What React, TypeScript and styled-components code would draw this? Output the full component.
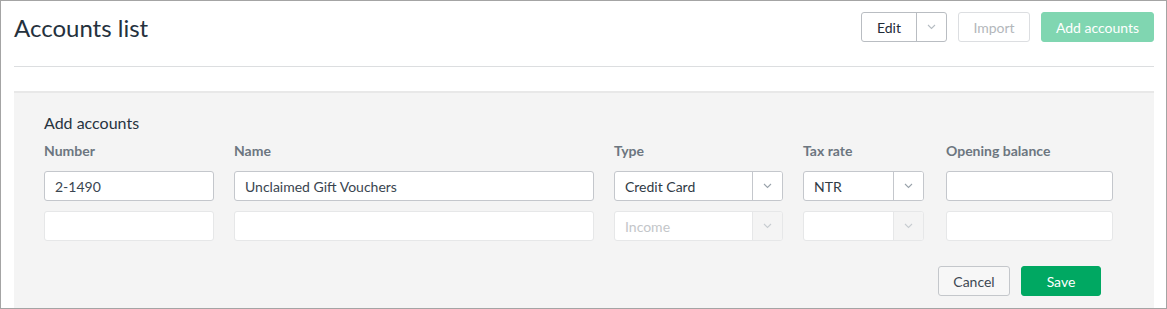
import React from 'react';
import styled, { createGlobalStyle } from 'styled-components';

const GlobalStyle = createGlobalStyle`
	html, body {
		margin: 0;
		padding: 0;
		background: #ffffff;
	}
	body {
		font-family: Lato, "Noto Sans", "Liberation Sans", sans-serif;
		color: #2f3b47;
	}
	* {
		box-sizing: border-box;
	}
`;

const Frame = styled.div`
	width: 1167px;
	height: 309px;
	border: 1px solid #a4a4a4;
	background: #ffffff;
	padding: 0 12px 0 13px;
	overflow: hidden;
`;

const Header = styled.div`
	display: flex;
	align-items: flex-start;
	justify-content: space-between;
	height: 66px;
	padding-top: 11px;
	border-bottom: 1px solid #dcdee0;
`;

const Title = styled.h1`
	margin: 0;
	font-size: 24px;
	font-weight: 400;
	line-height: 32px;
	color: #25313d;
`;

const Actions = styled.div`
	display: flex;
	gap: 11px;
`;

const ButtonGroup = styled.div`
	display: flex;
	border: 1px solid #b9bdc2;
	border-radius: 3px;
	height: 30px;
	background: #ffffff;
`;

const GroupButton = styled.button<{ $narrow?: boolean }>`
	display: flex;
	align-items: center;
	justify-content: center;
	width: ${({ $narrow }) => ($narrow ? '30px' : '54px')};
	height: 100%;
	padding: 0;
	border: none;
	border-left: ${({ $narrow }) => ($narrow ? '1px solid #b9bdc2' : 'none')};
	background: transparent;
	font-family: inherit;
	font-size: 14px;
	color: #1f2b37;
`;

const Button = styled.button<{ $variant?: 'default' | 'disabled' | 'primary' | 'primaryMuted'; $width: number }>`
	width: ${({ $width }) => $width}px;
	height: 30px;
	border-radius: 3px;
	font-family: inherit;
	font-size: 14px;
	padding: 0;
	border: 1px solid
		${({ $variant }) =>
			$variant === 'disabled' ? '#dcdee1' : $variant === 'primary' ? '#00a862' : $variant === 'primaryMuted' ? '#80d6b1' : '#c4c7cb'};
	background: ${({ $variant }) =>
		$variant === 'primary' ? '#00a862' : $variant === 'primaryMuted' ? '#80d6b1' : $variant === 'disabled' ? '#ffffff' : '#f7f7f7'};
	color: ${({ $variant }) =>
		$variant === 'disabled' ? '#b3b7bb' : $variant === 'primary' || $variant === 'primaryMuted' ? '#ffffff' : '#3d4853'};
`;

const Panel = styled.section`
	margin-top: 24px;
	border-top: 2px solid #e8e8e8;
	background: #f4f4f4;
	padding: 19px 53px 20px 30px;
	height: 230px;
`;

const PanelTitle = styled.h2`
	margin: 0;
	font-size: 16px;
	font-weight: 400;
	line-height: 22px;
	color: #27333f;
`;

const Grid = styled.div`
	display: grid;
	grid-template-columns: 170px 360px 169px 123px 167px;
	column-gap: 20px;
	row-gap: 10px;
	margin-top: 7px;
`;

const Label = styled.div`
	font-size: 14px;
	font-weight: 700;
	line-height: 20px;
	color: #6c7680;
`;

const Input = styled.div<{ $muted?: boolean }>`
	height: 30px;
	border: 1px solid ${({ $muted }) => ($muted ? '#e6e7e8' : '#c4c7cc')};
	border-radius: 3px;
	background: #ffffff;
	padding: 0 10px;
	display: flex;
	align-items: center;
	font-size: 14px;
	color: #3a4550;
`;

const Select = styled.div<{ $muted?: boolean; $width?: number }>`
	display: flex;
	height: 30px;
	width: ${({ $width }) => ($width ? `${$width}px` : '100%')};
	border: 1px solid ${({ $muted }) => ($muted ? '#e6e7e8' : '#c4c7cc')};
	border-radius: 3px;
	background: #ffffff;
	overflow: hidden;
`;

const SelectValue = styled.div<{ $placeholder?: boolean }>`
	flex: 1;
	display: flex;
	align-items: center;
	padding: 0 10px;
	font-size: 14px;
	color: ${({ $placeholder }) => ($placeholder ? '#c3c6c9' : '#2f3a45')};
`;

const SelectArrow = styled.div<{ $muted?: boolean }>`
	width: 30px;
	display: flex;
	align-items: center;
	justify-content: center;
	border-left: 1px solid ${({ $muted }) => ($muted ? '#e6e7e8' : '#c4c7cc')};
	background: ${({ $muted }) => ($muted ? '#f4f4f4' : '#ffffff')};
`;

const Footer = styled.div`
	display: flex;
	justify-content: flex-end;
	gap: 11px;
	margin-top: 25px;
`;

const Chevron = ({ color = '#9aa3ab' }: { color?: string }) => (
	<svg width='9' height='6' viewBox='0 0 9 6'>
		<path d='M1 1l3.5 3.5L8 1' fill='none' stroke={color} strokeWidth='1.1' />
	</svg>
);

const rows = [
	{ number: '2-1490', name: 'Unclaimed Gift Vouchers', type: 'Credit Card', tax: 'NTR', filled: true },
	{ number: '', name: '', type: 'Income', tax: '', filled: false }
];

const App = () => (
	<>
		<GlobalStyle />
		<Frame>
			<Header>
				<Title>Accounts list</Title>
				<Actions>
					<ButtonGroup>
						<GroupButton>Edit</GroupButton>
						<GroupButton $narrow><Chevron color='#b5bcc2' /></GroupButton>
					</ButtonGroup>
					<Button $variant='disabled' $width={72}>Import</Button>
					<Button $variant='primaryMuted' $width={113}>Add accounts</Button>
				</Actions>
			</Header>
			<Panel>
				<PanelTitle>Add accounts</PanelTitle>
				<Grid>
					<Label>Number</Label>
					<Label>Name</Label>
					<Label>Type</Label>
					<Label>Tax rate</Label>
					<Label>Opening balance</Label>
					{rows.map((row, i) => (
						<React.Fragment key={i}>
							<Input $muted={!row.filled}>{row.number}</Input>
							<Input $muted={!row.filled}>{row.name}</Input>
							<Select $muted={!row.filled}>
								<SelectValue $placeholder={!row.filled}>{row.type}</SelectValue>
								<SelectArrow $muted={!row.filled}><Chevron color={row.filled ? '#9aa3ab' : '#c8cdd1'} /></SelectArrow>
							</Select>
							<Select $muted={!row.filled} $width={121}>
								<SelectValue>{row.tax}</SelectValue>
								<SelectArrow $muted={!row.filled}><Chevron color={row.filled ? '#9aa3ab' : '#c8cdd1'} /></SelectArrow>
							</Select>
							<Input $muted={!row.filled} />
						</React.Fragment>
					))}
				</Grid>
				<Footer>
					<Button $width={72}>Cancel</Button>
					<Button $variant='primary' $width={80}>Save</Button>
				</Footer>
			</Panel>
		</Frame>
	</>
);

export default App;
